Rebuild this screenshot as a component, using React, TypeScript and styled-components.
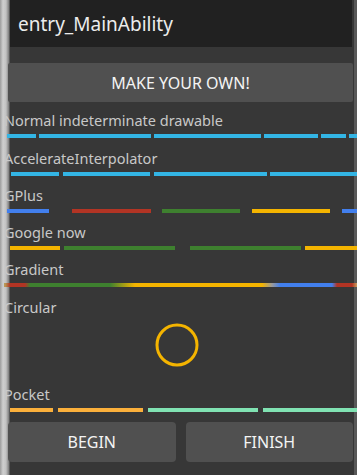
import styled, { createGlobalStyle } from "styled-components";

interface ISegment {
  x: number;
  w: number;
  c: string;
}

const holo = "#33b5e5";
const gBlue = "#427fed";
const gRed = "#b23424";
const gGreen = "#3e802f";
const gYellow = "#f4b400";
const pocketOrange = "#fbb03b";
const pocketMint = "#80e2b2";

const GlobalStyle = createGlobalStyle`
  html, body {
    margin: 0;
    padding: 0;
    background: #373737;
  }
  * {
    box-sizing: border-box;
  }
`;

const Frame = styled.div`
  width: 357px;
  min-height: 475px;
  overflow: hidden;
  font-family: "Noto Sans", "Open Sans", sans-serif;
  background: linear-gradient(
    to right,
    #9c9c9c 0px,
    #cfcfcf 3px,
    #c2c2c2 6px,
    #7c7c7c 9px,
    #373737 10px,
    #373737 354px,
    #585858 354px
  );
  display: flex;
  flex-direction: column;
`;

const TitleBar = styled.header`
  height: 47px;
  margin: 0 5px 0 10px;
  padding-left: 8px;
  background: #212121;
  color: #ececec;
  font-size: 19px;
  display: flex;
  align-items: center;
`;

const WideButton = styled.button<{ $top?: number }>`
  height: 39px;
  margin: ${(p) => p.$top ?? 0}px 4px 0 8px;
  border: none;
  border-radius: 2px;
  background: #505050;
  color: #f4f4f4;
  font-family: inherit;
  font-size: 16px;
  cursor: pointer;
`;

const Section = styled.section<{ $gap: number }>`
  margin-top: ${(p) => p.$gap}px;
  display: flex;
  flex-direction: column;
`;

const Label = styled.div`
  height: 18px;
  line-height: 18px;
  padding-left: 4px;
  color: #c8c8c8;
  font-size: 14.5px;
  white-space: nowrap;
`;

const BarSvg = styled.svg`
  display: block;
  margin-top: 5px;
  width: 357px;
  height: 4px;
`;

const SpinnerWrap = styled.div`
  height: 58px;
  padding-right: 3px;
  display: flex;
  align-items: center;
  justify-content: center;
`;

const ButtonRow = styled.div`
  margin: 10px 4px 0 8px;
  display: grid;
  grid-template-columns: 1fr 1fr;
  gap: 10px;
`;

const ActionButton = styled.button`
  height: 40px;
  border: none;
  border-radius: 4px;
  background: #505050;
  color: #f4f4f4;
  font-family: inherit;
  font-size: 16px;
  cursor: pointer;
`;

const SegmentBar = ({ segments }: { segments: ISegment[] }) => (
  <BarSvg viewBox="0 0 357 4" preserveAspectRatio="none">
    {segments.map((s, i) => (
      <rect key={i} x={s.x} y={0} width={s.w} height={4} fill={s.c} />
    ))}
  </BarSvg>
);

const GradientBar = () => (
  <BarSvg viewBox="0 0 357 4" preserveAspectRatio="none">
    <defs>
      <linearGradient id="gplusGradient" x1="0" x2="357" y1="0" y2="0" gradientUnits="userSpaceOnUse">
        <stop offset={5 / 357} stopColor="#b89a58" />
        <stop offset={10 / 357} stopColor={gRed} />
        <stop offset={25 / 357} stopColor={gRed} />
        <stop offset={30 / 357} stopColor={gGreen} />
        <stop offset={110 / 357} stopColor={gGreen} />
        <stop offset={135 / 357} stopColor={gYellow} />
        <stop offset={262 / 357} stopColor={gYellow} />
        <stop offset={272 / 357} stopColor="#9a9a9a" />
        <stop offset={280 / 357} stopColor={gBlue} />
        <stop offset={332 / 357} stopColor={gBlue} />
        <stop offset={337 / 357} stopColor={gRed} />
        <stop offset={352 / 357} stopColor={gRed} />
        <stop offset={1} stopColor="#c8a060" />
      </linearGradient>
    </defs>
    <rect x={4} y={0} width={353} height={4} fill="url(#gplusGradient)" />
  </BarSvg>
);

const normalSegments: ISegment[] = [
  { x: 7, w: 29, c: holo },
  { x: 39, w: 112, c: holo },
  { x: 154, w: 107, c: holo },
  { x: 264, w: 54, c: holo },
  { x: 321, w: 25, c: holo },
  { x: 349, w: 8, c: holo },
];

const accelerateSegments: ISegment[] = [
  { x: 11, w: 48, c: holo },
  { x: 63, w: 87, c: holo },
  { x: 154, w: 113, c: holo },
  { x: 270, w: 87, c: holo },
];

const gplusSegments: ISegment[] = [
  { x: 7, w: 42, c: gBlue },
  { x: 72, w: 79, c: gRed },
  { x: 162, w: 78, c: gGreen },
  { x: 252, w: 78, c: gYellow },
  { x: 342, w: 15, c: gBlue },
];

const googleNowSegments: ISegment[] = [
  { x: 10, w: 50, c: gYellow },
  { x: 64, w: 111, c: gGreen },
  { x: 190, w: 111, c: gGreen },
  { x: 305, w: 52, c: gYellow },
];

const pocketSegments: ISegment[] = [
  { x: 10, w: 43, c: pocketOrange },
  { x: 58, w: 85, c: pocketOrange },
  { x: 148, w: 110, c: pocketMint },
  { x: 263, w: 94, c: pocketMint },
];

export default function App() {
  return (
    <>
      <GlobalStyle />
      <Frame>
        <TitleBar>entry_MainAbility</TitleBar>
        <WideButton $top={16}>MAKE YOUR OWN!</WideButton>

        <Section $gap={9}>
          <Label>Normal indeterminate drawable</Label>
          <SegmentBar segments={normalSegments} />
        </Section>
        <Section $gap={11}>
          <Label>AccelerateInterpolator</Label>
          <SegmentBar segments={accelerateSegments} />
        </Section>
        <Section $gap={10}>
          <Label>GPlus</Label>
          <SegmentBar segments={gplusSegments} />
        </Section>
        <Section $gap={10}>
          <Label>Google now</Label>
          <SegmentBar segments={googleNowSegments} />
        </Section>
        <Section $gap={10}>
          <Label>Gradient</Label>
          <GradientBar />
        </Section>
        <Section $gap={11}>
          <Label>Circular</Label>
          <SpinnerWrap>
            <svg width="48" height="48" viewBox="0 0 48 48">
              <circle cx="24" cy="24" r="20" fill="none" stroke={gYellow} strokeWidth="3" />
            </svg>
          </SpinnerWrap>
        </Section>
        <Section $gap={11}>
          <Label>Pocket</Label>
          <SegmentBar segments={pocketSegments} />
        </Section>

        <ButtonRow>
          <ActionButton>BEGIN</ActionButton>
          <ActionButton>FINISH</ActionButton>
        </ButtonRow>
      </Frame>
    </>
  );
}
